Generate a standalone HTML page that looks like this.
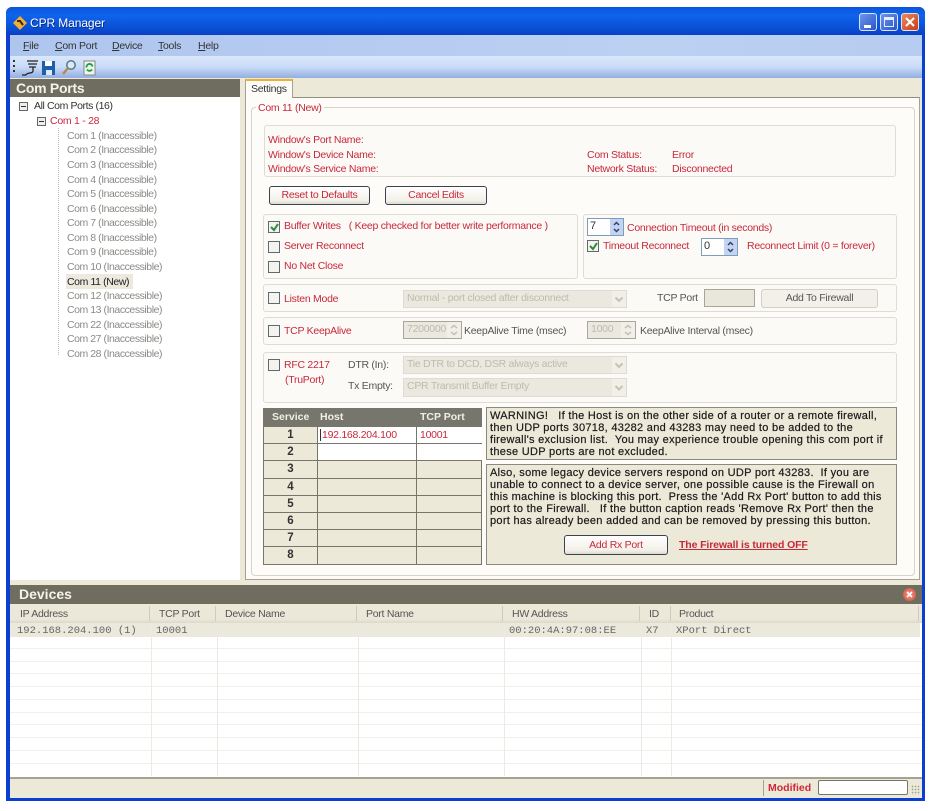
<!DOCTYPE html>
<html><head><meta charset="utf-8"><style>
html,body{margin:0;padding:0;width:944px;height:811px;background:#fff;overflow:hidden}
body{position:relative;font-family:"Liberation Sans",sans-serif;font-size:10.5px;letter-spacing:-.27px;color:#333}
div,span.a{position:absolute;box-sizing:border-box}
.t{white-space:nowrap;line-height:12px}
.r{color:#c8283c}.g{color:#8a8a86;letter-spacing:-.45px}.k{color:#555}
.gb{border:1px solid #dedcd4;border-radius:3px;background:#fbfaf7}
.btn{border:1px solid #3a4450;border-radius:3px;background:linear-gradient(#fff,#f2f0e8 80%,#dcd9cc);text-align:center;color:#c8283c;line-height:17px}
.cb{width:12px;height:12px;border:1px solid #5d6a72;background:#f4f3ee}
.dis{background:#ebe9df;border:1px solid #dedcd2;color:#bdbbae;line-height:15px;padding-left:3px;white-space:nowrap}
.ch{background:#eceae2;width:1px;top:623px;height:153px}
.rl{background:#f1f0ea;height:1px;left:10px;width:912px}
.hs{background:#cfccbd;width:1px;top:606px;height:15px}
.m{font-family:"Liberation Mono",monospace;font-size:10.5px;letter-spacing:0;color:#666;white-space:nowrap;line-height:12px;top:625px}
.cell{background:#77766c;height:1px;left:263px;width:219px}
.n{left:264px;width:53px;text-align:center;font-weight:bold;font-size:11.5px;letter-spacing:0;color:#333;line-height:14px}
.w{color:#1a1a1a;font-size:11px;line-height:12px;letter-spacing:.3px;-webkit-text-stroke:.2px #1a1a1a}
.ar{width:13px;height:16px}
u{text-decoration:underline}
</style></head><body>
<!-- window frame -->
<div style="left:6px;top:7px;width:919px;height:794px;background:#0a3fd0;border-radius:6px 6px 0 0"></div>
<div style="left:6px;top:7px;width:919px;height:28px;background:linear-gradient(#0a56dd,#0f63ec 30%,#0a52d8 70%,#0840c4);border-radius:6px 6px 0 0"></div>
<div class="t" style="left:30px;top:16px;color:#fff;font-size:12px;letter-spacing:-.1px;line-height:15px;text-shadow:1px 1px 0 #0a2f90">CPR Manager</div>
<svg style="position:absolute;left:12px;top:15px" width="16" height="16" viewBox="0 0 16 16"><path d="M8 1 15 8 8 15 1 8Z" fill="#f2b032"/><path d="M5 6 8 6 11 10" fill="none" stroke="#3a2a10" stroke-width="2"/></svg>
<!-- title buttons -->
<div style="left:859px;top:13px;width:18px;height:18px;background:linear-gradient(135deg,#6e95ee,#2a55c8);border:1px solid #d8e4fa;border-radius:3px"><div style="left:4px;top:11px;width:7px;height:3px;background:#fff"></div></div>
<div style="left:880px;top:13px;width:18px;height:18px;background:linear-gradient(135deg,#6e95ee,#2a55c8);border:1px solid #d8e4fa;border-radius:3px"><div style="left:3px;top:3px;width:10px;height:10px;border:1px solid #e6ecfa;border-top:3px solid #e6ecfa"></div></div>
<div style="left:901px;top:13px;width:18px;height:18px;background:linear-gradient(135deg,#e88a60,#c83c18);border:1px solid #e8e0dc;border-radius:3px"><svg style="position:absolute;left:2px;top:2px" width="12" height="12"><path d="M2 2 10 10M10 2 2 10" stroke="#fff" stroke-width="2"/></svg></div>
<!-- menu -->
<div style="left:10px;top:35px;width:912px;height:21px;background:linear-gradient(90deg,#aec5ee,#bcd0f2 70%,#b6ccf0)"></div>
<div class="t" style="left:23px;top:40px;color:#333"><u>F</u>ile</div>
<div class="t" style="left:55px;top:40px;color:#333"><u>C</u>om Port</div>
<div class="t" style="left:112px;top:40px;color:#333"><u>D</u>evice</div>
<div class="t" style="left:158px;top:40px;color:#333"><u>T</u>ools</div>
<div class="t" style="left:198px;top:40px;color:#333"><u>H</u>elp</div>
<!-- toolbar -->
<div style="left:10px;top:56px;width:912px;height:22px;background:linear-gradient(#dbe7fb,#c9dbf7 50%,#93aee0)"></div>
<div style="left:13px;top:60px;width:2px;height:2px;background:#333;box-shadow:0 5px #333,0 10px #333"></div>
<svg style="position:absolute;left:21px;top:58px" width="76" height="19" viewBox="0 0 76 19">
<path d="M6 3H17M7 6H16M8 9H15M12 9V13C12 16 6 14 5 17M1 17 5 17" fill="none" stroke="#222" stroke-width="1.3"/>
<path d="M21 3H34V17H21Z" fill="#1d5fa8"/><path d="M24 3H31V8H24Z" fill="#fff"/><path d="M25 12H31V17H25Z" fill="#dfe8f2"/>
<circle cx="50" cy="7" r="4.2" fill="#dfe9ee" stroke="#4d7c92" stroke-width="1.5"/><path d="M47 10 42 16" stroke="#b48a4a" stroke-width="2.4"/>
<path d="M63 3H74V17H63Z" fill="#eef4ee" stroke="#888"/><path d="M65.5 9.5A3 3 0 0 1 71.5 8.5M71 11.5A3 3 0 0 1 66 11.5" fill="none" stroke="#18a03c" stroke-width="1.8"/>
</svg>
<!-- left panel -->
<div style="left:10px;top:78px;width:912px;height:720px;background:#ece9d8"></div>
<div style="left:10px;top:79px;width:230px;height:18px;background:#6f6d5f"></div>
<div class="t" style="left:16px;top:80px;color:#f4f3ea;font-weight:bold;font-size:14px;line-height:16px">Com Ports</div>
<div style="left:10px;top:97px;width:230px;height:483px;background:#fff"></div>
<div style="left:19px;top:102px;width:9px;height:9px;border:1px solid #666;background:#eee"><div style="left:1px;top:3px;width:5px;height:1px;background:#333"></div></div>
<div style="left:37px;top:117px;width:9px;height:9px;border:1px solid #666;background:#eee"><div style="left:1px;top:3px;width:5px;height:1px;background:#333"></div></div>
<div class="t" style="left:34px;top:100px;letter-spacing:-.4px">All Com Ports (16)</div>
<div class="t r" style="left:50px;top:115px">Com 1 - 28</div>
<div style="left:58px;top:128px;width:0;height:227px;border-left:1px dotted #bbb"></div>
<div class="t g" style="left:67px;top:130px">Com 1 (Inaccessible)</div>
<div class="t g" style="left:67px;top:144px">Com 2 (Inaccessible)</div>
<div class="t g" style="left:67px;top:159px">Com 3 (Inaccessible)</div>
<div class="t g" style="left:67px;top:174px">Com 4 (Inaccessible)</div>
<div class="t g" style="left:67px;top:188px">Com 5 (Inaccessible)</div>
<div class="t g" style="left:67px;top:203px">Com 6 (Inaccessible)</div>
<div class="t g" style="left:67px;top:217px">Com 7 (Inaccessible)</div>
<div class="t g" style="left:67px;top:232px">Com 8 (Inaccessible)</div>
<div class="t g" style="left:67px;top:246px">Com 9 (Inaccessible)</div>
<div class="t g" style="left:67px;top:261px">Com 10 (Inaccessible)</div>
<div style="left:66px;top:274px;width:67px;height:15px;background:#ece9df"></div>
<div class="t" style="left:67px;top:276px;color:#222;letter-spacing:-.4px">Com 11 (New)</div>
<div class="t g" style="left:67px;top:290px">Com 12 (Inaccessible)</div>
<div class="t g" style="left:67px;top:304px">Com 13 (Inaccessible)</div>
<div class="t g" style="left:67px;top:319px">Com 22 (Inaccessible)</div>
<div class="t g" style="left:67px;top:333px">Com 27 (Inaccessible)</div>
<div class="t g" style="left:67px;top:348px;height:11px;overflow:hidden">Com 28 (Inaccessible)</div>
<!-- tab page -->
<div style="left:245px;top:97px;width:675px;height:483px;background:#fdfcf9;border:1px solid #a5a294;border-top:1px solid #918e80"></div>
<div style="left:245px;top:79px;width:48px;height:19px;background:#fdfcf9;border:1px solid #a5a294;border-bottom:0;border-top:2px solid #eeb030"></div>
<div class="t" style="left:251px;top:83px;color:#333">Settings</div>
<div style="left:251px;top:107px;width:664px;height:469px;border:1px solid #d5d3ca;border-radius:4px"></div>
<div class="t r" style="left:256px;top:102px;background:#fdfcf9;padding:0 2px">Com 11 (New)</div>
<!-- info -->
<div class="gb" style="left:264px;top:125px;width:632px;height:52px"></div>
<div class="t r" style="left:268px;top:134px">Window's Port Name:</div>
<div class="t r" style="left:268px;top:149px">Window's Device Name:</div>
<div class="t r" style="left:268px;top:163px">Window's Service Name:</div>
<div class="t r" style="left:587px;top:149px">Com Status:</div>
<div class="t r" style="left:672px;top:149px">Error</div>
<div class="t r" style="left:587px;top:163px">Network Status:</div>
<div class="t r" style="left:672px;top:163px">Disconnected</div>
<div class="btn" style="left:269px;top:186px;width:101px;height:19px">Reset to Defaults</div>
<div class="btn" style="left:385px;top:186px;width:102px;height:19px">Cancel Edits</div>
<!-- buffer group -->
<div class="gb" style="left:263px;top:214px;width:315px;height:65px"></div>
<div class="cb" style="left:268px;top:221px"><svg style="position:absolute;left:1px;top:1px" width="9" height="9"><path d="M1 4 4 7 8 1" fill="none" stroke="#2f8a3c" stroke-width="2"/></svg></div>
<div class="t r" style="left:284px;top:220px">Buffer Writes &nbsp; ( Keep checked for better write performance )</div>
<div class="cb" style="left:268px;top:241px"></div>
<div class="t r" style="left:284px;top:240px">Server Reconnect</div>
<div class="cb" style="left:268px;top:261px"></div>
<div class="t r" style="left:284px;top:260px">No Net Close</div>
<!-- timeout group -->
<div class="gb" style="left:583px;top:214px;width:314px;height:65px"></div>
<div style="left:587px;top:218px;width:37px;height:18px;background:#fff;border:1px solid #7f9db9;color:#333;font-size:11px;line-height:15px;padding-left:2px">7</div>
<svg style="position:absolute;left:610px;top:219px" width="13" height="16"><rect width="13" height="16" fill="#c3d3f3"/><path d="M4 6 6.5 3.5 9 6M4 10 6.5 12.5 9 10" fill="none" stroke="#33435f" stroke-width="1.5"/></svg>
<div class="t r" style="left:627px;top:222px">Connection Timeout (in seconds)</div>
<div class="cb" style="left:587px;top:240px"><svg style="position:absolute;left:1px;top:1px" width="9" height="9"><path d="M1 4 4 7 8 1" fill="none" stroke="#2f8a3c" stroke-width="2"/></svg></div>
<div class="t r" style="left:603px;top:240px">Timeout Reconnect</div>
<div style="left:701px;top:238px;width:37px;height:18px;background:#fff;border:1px solid #7f9db9;color:#333;font-size:11px;line-height:15px;padding-left:2px">0</div>
<svg style="position:absolute;left:724px;top:239px" width="13" height="16"><rect width="13" height="16" fill="#c3d3f3"/><path d="M4 6 6.5 3.5 9 6M4 10 6.5 12.5 9 10" fill="none" stroke="#33435f" stroke-width="1.5"/></svg>
<div class="t r" style="left:747px;top:240px">Reconnect Limit (0 = forever)</div>
<!-- listen -->
<div class="gb" style="left:263px;top:284px;width:634px;height:28px"></div>
<div class="cb" style="left:268px;top:292px"></div>
<div class="t r" style="left:284px;top:293px">Listen Mode</div>
<div class="dis" style="left:403px;top:290px;width:224px;height:18px">Normal - port closed after disconnect</div>
<svg style="position:absolute;left:612px;top:291px" width="14" height="16"><rect width="14" height="16" fill="#f1efe8"/><path d="M3.5 6.5 7 10 10.5 6.5" fill="none" stroke="#c4c2b6" stroke-width="2"/></svg>
<div class="t" style="left:657px;top:292px;color:#555">TCP Port</div>
<div style="left:704px;top:289px;width:51px;height:18px;background:#e9e7dc;border:1px solid #a8a698"></div>
<div style="left:761px;top:289px;width:117px;height:19px;border:1px solid #d2d0c4;border-radius:3px;background:#f2f0e8;color:#555;text-align:center;line-height:17px">Add To Firewall</div>
<!-- keepalive -->
<div class="gb" style="left:263px;top:317px;width:634px;height:28px"></div>
<div class="cb" style="left:268px;top:325px"></div>
<div class="t r" style="left:284px;top:325px">TCP KeepAlive</div>
<div class="dis" style="left:403px;top:321px;width:59px;height:18px;border-color:#a8a698">7200000</div>
<svg style="position:absolute;left:447px;top:322px" width="14" height="16"><rect width="14" height="16" fill="#f1efe8"/><path d="M4 6 7 3.5 10 6M4 10 7 12.5 10 10" fill="none" stroke="#c4c2b6" stroke-width="1.5"/></svg>
<div class="t k" style="left:464px;top:325px">KeepAlive Time (msec)</div>
<div class="dis" style="left:587px;top:321px;width:49px;height:18px;border-color:#a8a698">1000</div>
<svg style="position:absolute;left:621px;top:322px" width="14" height="16"><rect width="14" height="16" fill="#f1efe8"/><path d="M4 6 7 3.5 10 6M4 10 7 12.5 10 10" fill="none" stroke="#c4c2b6" stroke-width="1.5"/></svg>
<div class="t k" style="left:640px;top:325px">KeepAlive Interval (msec)</div>
<!-- rfc -->
<div class="gb" style="left:263px;top:352px;width:634px;height:51px"></div>
<div class="cb" style="left:268px;top:359px"></div>
<div class="t r" style="left:284px;top:359px">RFC 2217</div>
<div class="t r" style="left:285px;top:374px">(TruPort)</div>
<div class="t k" style="left:348px;top:359px">DTR (In):</div>
<div class="t k" style="left:348px;top:380px">Tx Empty:</div>
<div class="dis" style="left:403px;top:356px;width:224px;height:18px">Tie DTR to DCD, DSR always active</div>
<svg style="position:absolute;left:612px;top:357px" width="14" height="16"><rect width="14" height="16" fill="#f1efe8"/><path d="M3.5 6.5 7 10 10.5 6.5" fill="none" stroke="#c4c2b6" stroke-width="2"/></svg>
<div class="dis" style="left:403px;top:378px;width:224px;height:19px">CPR Transmit Buffer Empty</div>
<svg style="position:absolute;left:612px;top:379px" width="14" height="17"><rect width="14" height="17" fill="#f1efe8"/><path d="M3.5 7 7 10.5 10.5 7" fill="none" stroke="#c4c2b6" stroke-width="2"/></svg>
<!-- table -->
<div style="left:263px;top:408px;width:219px;height:157px;background:#ece9d8;border:1px solid #77766c"></div>
<div style="left:263px;top:408px;width:219px;height:19px;background:#77766c"></div>
<div class="t" style="left:272px;top:411px;color:#f0efe6;font-weight:bold;letter-spacing:0">Service</div>
<div class="t" style="left:320px;top:411px;color:#f0efe6;font-weight:bold;letter-spacing:0">Host</div>
<div class="t" style="left:420px;top:411px;color:#f0efe6;font-weight:bold;letter-spacing:0">TCP Port</div>
<div style="left:317px;top:427px;width:165px;height:33px;background:#fff"></div>
<div class="cell" style="top:443px"></div><div class="cell" style="top:460px"></div><div class="cell" style="top:478px"></div><div class="cell" style="top:495px"></div><div class="cell" style="top:512px"></div><div class="cell" style="top:529px"></div><div class="cell" style="top:546px"></div>
<div style="left:317px;top:408px;width:1px;height:157px;background:#77766c"></div>
<div style="left:416px;top:408px;width:1px;height:157px;background:#77766c"></div>
<div class="n" style="top:428px">1</div><div class="n" style="top:445px">2</div><div class="n" style="top:462px">3</div><div class="n" style="top:480px">4</div><div class="n" style="top:497px">5</div><div class="n" style="top:514px">6</div><div class="n" style="top:531px">7</div><div class="n" style="top:548px">8</div>
<div class="t r" style="left:320px;top:429px;border-left:1px solid #333;padding-left:1px">192.168.204.100</div>
<div class="t r" style="left:420px;top:429px">10001</div>
<!-- warnings -->
<div style="left:486px;top:407px;width:411px;height:53px;background:#ece9d8;border:1px solid #8b8a80"></div>
<div class="t w" style="left:490px;top:410px">WARNING! &nbsp; If the Host is on the other side of a router or a remote firewall,<br>then UDP ports 30718, 43282 and 43283 may need to be added to the<br>firewall's exclusion list. &nbsp;You may experience trouble opening this com port if<br>these UDP ports are not excluded.</div>
<div style="left:486px;top:464px;width:411px;height:101px;background:#ece9d8;border:1px solid #8b8a80"></div>
<div class="t w" style="left:490px;top:467px">Also, some legacy device servers respond on UDP port 43283. &nbsp;If you are<br>unable to connect to a device server, one possible cause is the Firewall on<br>this machine is blocking this port. &nbsp;Press the 'Add Rx Port' button to add this<br>port to the Firewall. &nbsp; If the button caption reads 'Remove Rx Port' then the<br>port has already been added and can be removed by pressing this button.</div>
<div class="btn" style="left:564px;top:535px;width:104px;height:20px;line-height:18px">Add Rx Port</div>
<div class="t r" style="left:679px;top:539px;font-weight:bold;text-decoration:underline;letter-spacing:-.12px">The Firewall is turned OFF</div>
<!-- devices -->
<div style="left:10px;top:585px;width:912px;height:19px;background:#6f6d5f"></div>
<div class="t" style="left:19px;top:586px;color:#f4f3ea;font-weight:bold;font-size:14px;letter-spacing:0;line-height:16px">Devices</div>
<div style="left:903px;top:588px;width:13px;height:13px;border-radius:50%;background:radial-gradient(#f29a8a,#d24a38)"><svg style="position:absolute;left:3px;top:3px" width="7" height="7"><path d="M1 1 6 6M6 1 1 6" stroke="#fff" stroke-width="1.6"/></svg></div>
<div style="left:10px;top:604px;width:912px;height:19px;background:linear-gradient(#ece9d8,#ebe8da 80%,#dcd9cb)"></div>
<div class="hs" style="left:149px"></div><div class="hs" style="left:215px"></div><div class="hs" style="left:356px"></div><div class="hs" style="left:502px"></div><div class="hs" style="left:639px"></div><div class="hs" style="left:670px"></div><div class="hs" style="left:918px"></div>
<div class="t k" style="left:20px;top:608px">IP Address</div>
<div class="t k" style="left:159px;top:608px">TCP Port</div>
<div class="t k" style="left:225px;top:608px">Device Name</div>
<div class="t k" style="left:366px;top:608px">Port Name</div>
<div class="t k" style="left:512px;top:608px">HW Address</div>
<div class="t k" style="left:649px;top:608px">ID</div>
<div class="t k" style="left:679px;top:608px">Product</div>
<div style="left:10px;top:623px;width:912px;height:155px;background:#fff"></div>
<div style="left:10px;top:623px;width:910px;height:14px;background:#ebe8dc"></div>
<div class="rl" style="top:648px"></div><div class="rl" style="top:661px"></div><div class="rl" style="top:673px"></div><div class="rl" style="top:686px"></div><div class="rl" style="top:699px"></div><div class="rl" style="top:712px"></div><div class="rl" style="top:724px"></div><div class="rl" style="top:737px"></div><div class="rl" style="top:750px"></div><div class="rl" style="top:763px"></div>
<div class="ch" style="left:151px"></div><div class="ch" style="left:217px"></div><div class="ch" style="left:358px"></div><div class="ch" style="left:504px"></div><div class="ch" style="left:641px"></div><div class="ch" style="left:671px"></div>
<div class="m" style="left:17px">192.168.204.100 (1)</div>
<div class="m" style="left:156px">10001</div>
<div class="m" style="left:509px">00:20:4A:97:08:EE</div>
<div class="m" style="left:646px">X7</div>
<div class="m" style="left:676px">XPort Direct</div>
<!-- status -->
<div style="left:10px;top:777px;width:912px;height:21px;background:#ece9d8;border-top:2px solid #a5a294"></div>
<div style="left:763px;top:780px;width:1px;height:16px;background:#a5a294"></div>
<div class="t" style="left:768px;top:782px;color:#d02838;font-weight:bold;letter-spacing:0">Modified</div>
<div style="left:818px;top:780px;width:90px;height:15px;background:#fff;border:1px solid #77766c;border-radius:2px"></div>
<div style="left:911px;top:785px;width:9px;height:10px;background:radial-gradient(#a09e90 35%,transparent 40%) 0 0/3px 3px"></div>
</body></html>
